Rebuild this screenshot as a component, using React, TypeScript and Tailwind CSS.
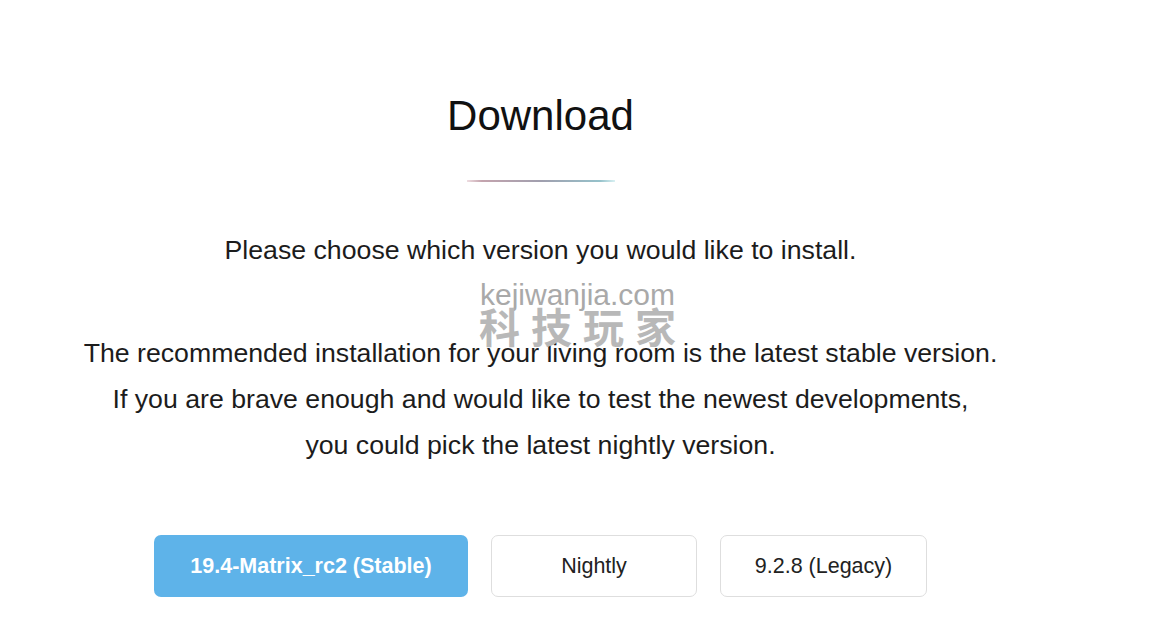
import React from 'react';

const versions = [
  { label: '19.4-Matrix_rc2 (Stable)', width: 'w-[314px]', primary: true },
  { label: 'Nightly', width: 'w-[206px]', primary: false },
  { label: '9.2.8 (Legacy)', width: 'w-[207px]', primary: false },
];

export default function App() {
  return (
    <div className="relative min-h-[624px] w-full bg-white font-['Liberation_Sans',Arial,sans-serif] text-[#1c1c1c]">
      <div className="w-[1081px] pt-[92px] text-center">
        {/* ── Heading ── */}
        <h1 className="text-[42px] leading-[48px] font-normal text-[#111]">Download</h1>

        {/* Gradient rule under the heading */}
        <div className="mt-[40px] flex justify-center">
          <div className="h-[2px] w-[148px] bg-[linear-gradient(90deg,rgba(214,170,180,0.4)_0%,#c4a4ae_10%,#a09fae_50%,#96c2cb_90%,rgba(160,220,225,0.4)_100%)]" />
        </div>

        <p className="mt-[45px] text-[26.7px] leading-[46px]">
          Please choose which version you would like to install.
        </p>

        <div className="mt-[57px] text-[26.7px] leading-[46px]">
          <p>The recommended installation for your living room is the latest stable version.</p>
          <p>If you are brave enough and would like to test the newest developments,</p>
          <p>you could pick the latest nightly version.</p>
        </div>

        {/* ── Version buttons ── */}
        <div className="mt-[67px] flex justify-center gap-[23px]">
          {versions.map((v) => (
            <button
              key={v.label}
              className={
                v.primary
                  ? `${v.width} h-[62px] rounded-[7px] bg-[#5eb3e9] text-[21.5px] font-bold text-white`
                  : `${v.width} h-[62px] rounded-[7px] border border-[#dedede] bg-white text-[21.5px] text-[#222]`
              }
            >
              {v.label}
            </button>
          ))}
        </div>
      </div>

      {/* Watermark overlay */}
      <div className="pointer-events-none absolute left-0 right-0 top-[280px] flex flex-col items-center select-none">
        <span className="text-[30px] leading-[30px] text-[#a9a9a9]">kejiwanjia.com</span>
        <span className="mt-[-6px] pl-[11px] font-['Noto_Sans_CJK_SC',sans-serif] text-[41px] font-bold leading-[42px] tracking-[11px] text-[#b8b8b8]">
          科技玩家
        </span>
      </div>
    </div>
  );
}
